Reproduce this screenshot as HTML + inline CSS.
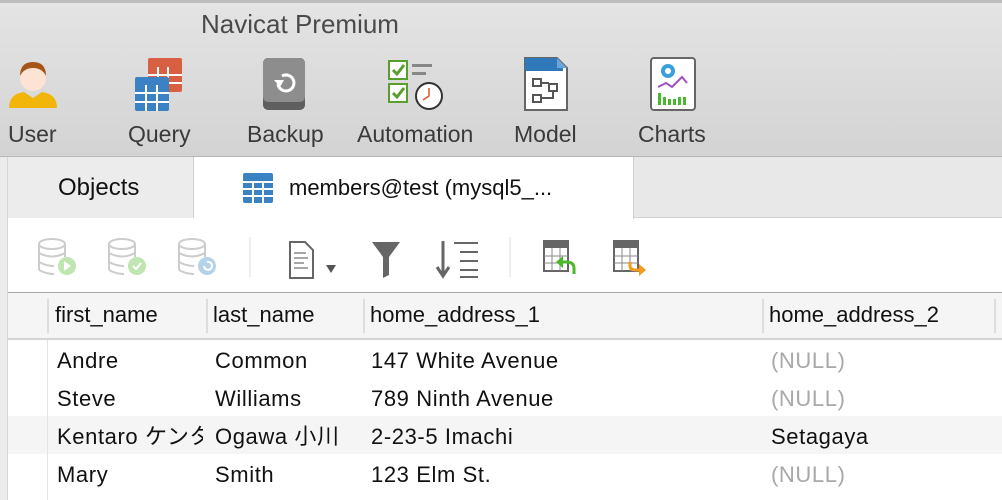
<!DOCTYPE html>
<html><head><meta charset="utf-8"><style>
*{margin:0;padding:0;box-sizing:border-box}
body{width:1002px;height:500px;overflow:hidden;position:relative;font-family:"Liberation Sans","Noto Sans CJK JP",sans-serif;background:#fff}
.abs{position:absolute}
#top{left:0;top:0;width:1002px;height:157px;background:linear-gradient(#e4e4e4,#d3d3d3);border-top:3px solid #bdbdbd;border-bottom:1px solid #b8b8b8}
.title{top:9px;left:0;width:600px;text-align:center;font-size:26px;color:#4a4a4a}
.lbl{top:121px;font-size:23px;color:#3a3a3a}
#tabs{left:0;top:157px;width:1002px;height:61px;background:#e8e8e8;border-bottom:1px solid #d0d0d0}
.t{font-size:22px;color:#111}
.cell{position:absolute;font-size:22px;line-height:26px;height:26px;color:#111;white-space:nowrap}
.d{letter-spacing:0.6px}
.null{color:#a8a8a8}
</style></head><body>
<div id="top" class="abs"></div>
<div class="abs title">Navicat Premium</div>
<svg class="abs" style="left:6px;top:56px" width="54" height="56"><circle cx="27" cy="22" r="13" fill="#fde3d4"/><path d="M14 20 Q14 6 27 6 Q40 6 40 20 Q36 12 27 12 Q18 12 14 20Z" fill="#a55519"/><path d="M3 52 Q3 38 18 36 L27 42 L36 36 Q51 38 51 52Z" fill="#f2b50a"/></svg>
<div class="abs lbl" style="left:8px">User</div>
<svg class="abs" style="left:134px;top:57px" width="52" height="56"><rect x="14" y="1" width="34" height="34" rx="2" fill="#d95f43"/><g stroke="#fff" stroke-width="2"><line x1="24" y1="10" x2="24" y2="35"/><line x1="34" y1="10" x2="34" y2="35"/><line x1="14" y1="18" x2="48" y2="18"/><line x1="14" y1="26" x2="48" y2="26"/></g><rect x="1" y="20" width="34" height="34" rx="2" fill="#3a82c4"/><g stroke="#fff" stroke-width="2"><line x1="12" y1="28" x2="12" y2="54"/><line x1="23" y1="28" x2="23" y2="54"/><line x1="1" y1="36" x2="35" y2="36"/><line x1="1" y1="45" x2="35" y2="45"/></g></svg>
<div class="abs lbl" style="left:128px">Query</div>
<svg class="abs" style="left:262px;top:57px" width="44" height="54"><rect x="1" y="1" width="42" height="52" rx="5" fill="#5f5f5f"/><rect x="1" y="1" width="42" height="44" rx="5" fill="#8d8d8d"/><path d="M16 27 A8 8 0 1 0 20 19" stroke="#fff" stroke-width="3" fill="none"/><path d="M12 23 L18 30 L22 23Z" fill="#fff"/></svg>
<div class="abs lbl" style="left:247px">Backup</div>
<svg class="abs" style="left:386px;top:58px" width="60" height="54"><rect x="3" y="3" width="18" height="18" fill="#fff" stroke="#5a9e2f" stroke-width="2"/><path d="M7 12 l4 4 l7 -9" stroke="#5a9e2f" stroke-width="3" fill="none"/><rect x="3" y="26" width="18" height="18" fill="#fff" stroke="#5a9e2f" stroke-width="2"/><path d="M7 35 l4 4 l7 -9" stroke="#5a9e2f" stroke-width="3" fill="none"/><rect x="26" y="6" width="20" height="3" fill="#888"/><rect x="26" y="14" width="14" height="3" fill="#888"/><circle cx="43" cy="38" r="13" fill="#fff" stroke="#333" stroke-width="2"/><path d="M43 30 V38 L37 42" stroke="#e05030" stroke-width="1.5" fill="none"/></svg>
<div class="abs lbl" style="left:357px">Automation</div>
<svg class="abs" style="left:523px;top:57px" width="46" height="54"><path d="M2 1 H34 L44 11 V53 H2Z" fill="#fff" stroke="#666" stroke-width="2"/><path d="M2 1 H34 L40 7 V14 H2Z" fill="#2f78b9"/><path d="M34 1 L44 11 H34Z" fill="#6aa6dc"/><g stroke="#555" stroke-width="2" fill="none"><rect x="10" y="22" width="8" height="7"/><rect x="26" y="27" width="8" height="7"/><rect x="10" y="38" width="8" height="7"/><path d="M18 26 H26 M30 34 V41 H18"/></g></svg>
<div class="abs lbl" style="left:514px">Model</div>
<svg class="abs" style="left:649px;top:57px" width="48" height="54"><rect x="2" y="1" width="44" height="52" rx="3" fill="#fff" stroke="#666" stroke-width="2"/><circle cx="19" cy="14" r="5" fill="none" stroke="#3aa0dc" stroke-width="4"/><path d="M9 30 l8 -4 l6 4 l10 -10 l5 6" stroke="#a050c0" stroke-width="2" fill="none"/><g fill="#49b82c"><rect x="9" y="36" width="3" height="12"/><rect x="14" y="40" width="3" height="8"/><rect x="19" y="42" width="3" height="6"/><rect x="24" y="42" width="3" height="6"/><rect x="29" y="40" width="3" height="8"/><rect x="34" y="40" width="3" height="8"/></g></svg>
<div class="abs lbl" style="left:638px">Charts</div>

<div id="tabs" class="abs"></div>
<div class="abs" style="left:0;top:157px;width:8px;height:343px;background:#ececec;border-right:1px solid #d6d6d6"></div>
<div class="abs" style="left:8px;top:157px;width:186px;height:61px;background:#ececec;border-right:1px solid #cfcfcf"></div>
<div class="abs t" style="left:58px;top:174px;font-size:24px">Objects</div>
<div class="abs" style="left:194px;top:157px;width:440px;height:62px;background:#fff;border-right:1px solid #cfcfcf"></div>
<svg class="abs" style="left:242px;top:172px" width="32" height="32"><rect x="1" y="1" width="30" height="30" rx="2" fill="#3a82c4"/><g stroke="#fff" stroke-width="2"><line x1="1" y1="10" x2="31" y2="10"/><line x1="1" y1="17" x2="31" y2="17"/><line x1="1" y1="24" x2="31" y2="24"/><line x1="11" y1="10" x2="11" y2="31"/><line x1="21" y1="10" x2="21" y2="31"/></g></svg>
<div class="abs t" style="left:289px;top:175px">members@test (mysql5_...</div>

<svg class="abs" style="left:36px;top:235px" width="500" height="45">
<g fill="none" stroke="#ccc" stroke-width="2"><ellipse cx="16" cy="9" rx="13" ry="5"/><path d="M3 9 V35 M29 9 V22 M3 18 Q16 25 29 18 M3 27 Q10 31 18 31 M3 35 Q10 39 18 39"/></g><circle cx="31" cy="31" r="9" fill="#bfe6b0"/><path d="M28 26 L35 31 L28 36Z" fill="#fff"/>
<g transform="translate(70,0)"><g fill="none" stroke="#ccc" stroke-width="2"><ellipse cx="16" cy="9" rx="13" ry="5"/><path d="M3 9 V35 M29 9 V22 M3 18 Q16 25 29 18 M3 27 Q10 31 18 31 M3 35 Q10 39 18 39"/></g><circle cx="31" cy="31" r="9" fill="#bfe6b0"/><path d="M27 31 l3 3 l5 -6" stroke="#fff" stroke-width="2" fill="none"/></g>
<g transform="translate(140,0)"><g fill="none" stroke="#ccc" stroke-width="2"><ellipse cx="16" cy="9" rx="13" ry="5"/><path d="M3 9 V35 M29 9 V22 M3 18 Q16 25 29 18 M3 27 Q10 31 18 31 M3 35 Q10 39 18 39"/></g><circle cx="31" cy="31" r="9" fill="#b4d2ea"/><path d="M28 31 A4 4 0 1 0 31 27" stroke="#fff" stroke-width="2" fill="none"/></g>
<line x1="214" y1="2" x2="214" y2="42" stroke="#ddd"/>
<path d="M254 7 H269 L277 15 V43 H254Z" fill="#fff" stroke="#666" stroke-width="2"/><g stroke="#888" stroke-width="1.5"><line x1="258" y1="18" x2="270" y2="18"/><line x1="258" y1="23" x2="272" y2="23"/><line x1="258" y1="28" x2="268" y2="28"/><line x1="258" y1="33" x2="272" y2="33"/></g><path d="M290 30 H300 L295 38Z" fill="#555"/>
<path d="M336 7 H364 L353 22 V40 L347 43 V22Z" fill="#666"/>
<path d="M407 6 V38 M401 32 L407 41 L413 32" stroke="#666" stroke-width="3" fill="none"/><g stroke="#666" stroke-width="2"><line x1="418" y1="8" x2="442" y2="8"/><line x1="424" y1="17" x2="442" y2="17"/><line x1="424" y1="26" x2="442" y2="26"/><line x1="424" y1="35" x2="442" y2="35"/><line x1="424" y1="42" x2="442" y2="42"/></g>
<line x1="474" y1="2" x2="474" y2="42" stroke="#ddd"/>
</svg>
<svg class="abs" style="left:540px;top:238px" width="120" height="40">
<rect x="4" y="3" width="24" height="30" fill="#fff" stroke="#666" stroke-width="2"/><rect x="4" y="3" width="24" height="7" fill="#666"/><g stroke="#888"><line x1="12" y1="10" x2="12" y2="33"/><line x1="20" y1="10" x2="20" y2="33"/><line x1="4" y1="18" x2="28" y2="18"/><line x1="4" y1="25" x2="28" y2="25"/></g><path d="M34 36 V30 Q34 24 26 24 H22" stroke="#4cb82c" stroke-width="3" fill="none"/><path d="M16 24 L23 18 V30Z" fill="#4cb82c"/>
<g transform="translate(70,0)"><rect x="4" y="3" width="24" height="30" fill="#fff" stroke="#666" stroke-width="2"/><rect x="4" y="3" width="24" height="7" fill="#666"/><g stroke="#888"><line x1="12" y1="10" x2="12" y2="33"/><line x1="20" y1="10" x2="20" y2="33"/><line x1="4" y1="18" x2="28" y2="18"/><line x1="4" y1="25" x2="28" y2="25"/></g><path d="M20 24 V28 Q20 32 26 32 H30" stroke="#f29b1d" stroke-width="3" fill="none"/><path d="M36 32 L29 26 V38Z" fill="#f29b1d"/></g>
</svg>

<div class="abs" style="left:8px;top:292px;width:994px;height:48px;background:#f5f5f5;border-top:1px solid #a8a8a8;border-bottom:2px solid #d4d4d4"></div>
<div class="abs" style="left:8px;top:416px;width:994px;height:38px;background:#f5f5f5"></div>
<div class="abs" style="left:47px;top:340px;width:1px;height:160px;background:#e4e4e4"></div>
<div class="abs" style="left:47px;top:299px;width:2px;height:34px;background:#ddd"></div>
<div class="abs" style="left:206px;top:299px;width:2px;height:34px;background:#ddd"></div>
<div class="abs" style="left:363px;top:299px;width:2px;height:34px;background:#ddd"></div>
<div class="abs" style="left:762px;top:299px;width:2px;height:34px;background:#ddd"></div>
<div class="abs" style="left:994px;top:299px;width:2px;height:34px;background:#ddd"></div>
<div class="cell" style="left:55px;top:302px">first_name</div>
<div class="cell" style="left:213px;top:302px">last_name</div>
<div class="cell" style="left:370px;top:302px">home_address_1</div>
<div class="cell" style="left:769px;top:302px">home_address_2</div>

<div class="cell d" style="left:57px;top:348px">Andre</div><div class="cell d" style="left:215px;top:348px">Common</div><div class="cell d" style="left:371px;top:348px">147 White Avenue</div><div class="cell d null" style="left:771px;top:348px">(NULL)</div>
<div class="cell d" style="left:57px;top:386px">Steve</div><div class="cell d" style="left:215px;top:386px">Williams</div><div class="cell d" style="left:371px;top:386px">789 Ninth Avenue</div><div class="cell d null" style="left:771px;top:386px">(NULL)</div>
<div class="cell d" style="left:57px;top:424px;width:146px;overflow:hidden">Kentaro ケンタロウ</div><div class="cell d" style="left:215px;top:424px;width:146px;overflow:hidden">Ogawa 小川</div><div class="cell d" style="left:371px;top:424px">2-23-5 Imachi</div><div class="cell d" style="left:771px;top:424px">Setagaya</div>
<div class="cell d" style="left:57px;top:462px">Mary</div><div class="cell d" style="left:215px;top:462px">Smith</div><div class="cell d" style="left:371px;top:462px">123 Elm St.</div><div class="cell d null" style="left:771px;top:462px">(NULL)</div>
</body></html>
